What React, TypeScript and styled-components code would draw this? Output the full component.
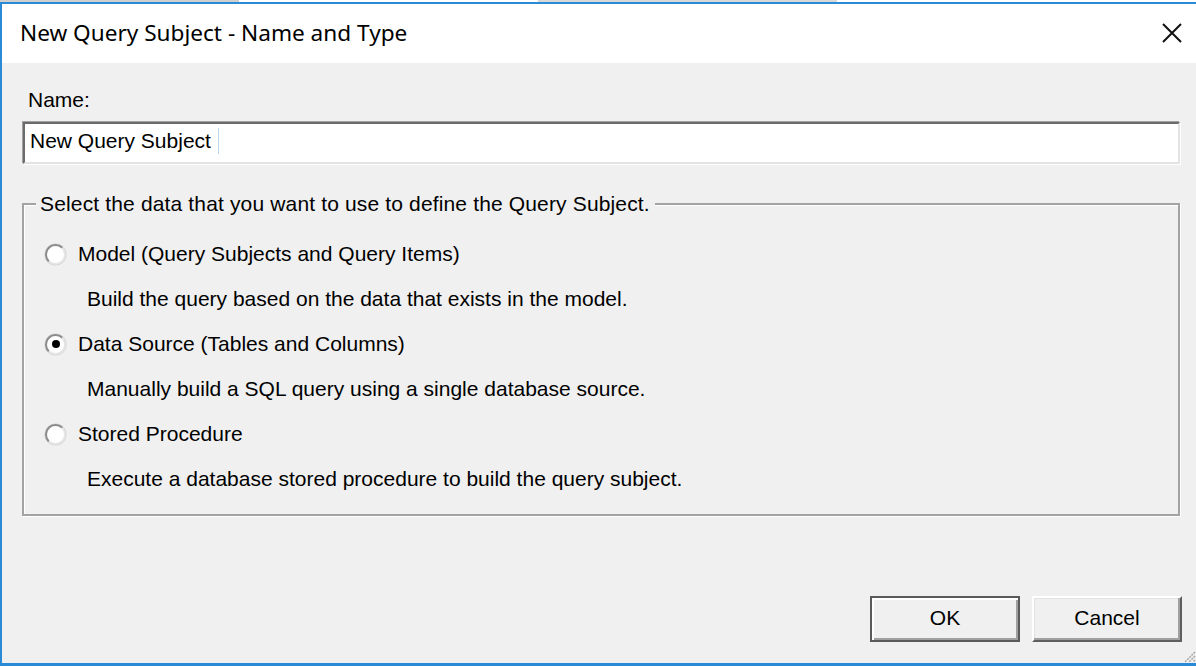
import React from "react";
import styled, { createGlobalStyle } from "styled-components";

const GlobalStyle = createGlobalStyle`
  html, body { margin: 0; padding: 0; background: #f0f0f0; overflow: hidden; }
  * { box-sizing: border-box; }
`;

const Screen = styled.div`
  width: 1196px;
  height: 666px;
  display: flex;
  flex-direction: column;
  font-family: "Liberation Sans", Arial, sans-serif;
  color: #000;
`;

const BackStrip = styled.div`
  height: 2px;
  background: linear-gradient(90deg, #cfcfcf 0 20%, #ffffff 20% 45%, #d8d8d8 45% 70%, #ffffff 70%);
`;

const Frame = styled.div`
  flex: 1;
  display: flex;
  flex-direction: column;
  border-top: 2px solid #2b8ad6;
  border-left: 2px solid #2b8ad6;
  border-bottom: 3px solid #2b8ad6;
  min-height: 0;
`;

const TitleBar = styled.div`
  height: 59px;
  flex: none;
  background: #fff;
  display: flex;
  align-items: center;
  padding: 0 14px 0 18px;
`;

const Title = styled.div`
  flex: 1;
  font-family: "Noto Sans", "Open Sans", sans-serif;
  font-size: 22.6px;
  line-height: 28px;
  color: #000;
  margin-top: -2px;
`;

const CloseButton = styled.div`
  width: 20px;
  height: 20px;
  display: flex;
  margin-top: -1px;
`;

const Body = styled.div`
  position: relative;
  flex: 1;
  background: #f0f0f0;
  display: flex;
  flex-direction: column;
  padding: 25px 16px 21px 20px;
  min-height: 0;
`;

const FieldLabel = styled.div`
  font-size: 21px;
  line-height: 24px;
  padding-left: 6px;
`;

const TextBox = styled.div`
  margin: 10px 0 0 1px;
  height: 42px;
  background: #fff;
  border-style: solid;
  border-width: 2px;
  border-color: #6b6b6b #e3e3e3 #e3e3e3 #6b6b6b;
  box-shadow: -1px -1px 0 #a0a0a0, 1px 1px 0 #fff;
  display: flex;
  align-items: center;
  padding: 0 0 4px 5px;
  font-size: 21px;
`;

const Caret = styled.span`
  display: inline-block;
  width: 1px;
  height: 26px;
  background: #b8d4ee;
  margin-left: 7px;
`;

const Group = styled.fieldset`
  margin: 28px 0 0 0;
  padding: 0;
  border: 2px solid #a3a3a3;
  box-shadow: inset 1px 1px 0 #fff, 1px 1px 0 #fff;
  min-width: 0;
`;

const Legend = styled.legend`
  margin-left: 12px;
  padding: 0 5px 0 4px;
  font-size: 21px;
  line-height: 24px;
  letter-spacing: 0.15px;
  background: #f0f0f0;
`;

const Options = styled.div`
  display: flex;
  flex-direction: column;
  padding: 16px 0 12px 21px;
`;

const Row = styled.div<{ $indent?: number }>`
  height: 45px;
  display: flex;
  align-items: center;
  padding-left: ${(p) => p.$indent ?? 0}px;
  padding-bottom: 1px;
  font-size: 21px;
`;

const Radio = styled.span<{ $checked?: boolean }>`
  width: 21px;
  height: 21px;
  border-radius: 50%;
  flex: none;
  background: #fff;
  border: 2px solid;
  border-color: #8c8c8c #e6e6e6 #e6e6e6 #8c8c8c;
  box-shadow: 0 0 0 0.5px #d0d0d0;
  display: flex;
  align-items: center;
  justify-content: center;
  margin-right: 12px;
  &::after {
    content: "";
    width: 8px;
    height: 8px;
    border-radius: 50%;
    background: #000;
    display: ${(p) => (p.$checked ? "block" : "none")};
  }
`;

const Spacer = styled.div`
  flex: 1;
`;

const ButtonRow = styled.div`
  display: flex;
  justify-content: flex-end;
  gap: 12px;
  margin-right: -2px;
`;

const Button = styled.div<{ $default?: boolean }>`
  width: 150px;
  height: 46px;
  display: flex;
  align-items: center;
  justify-content: center;
  padding-bottom: 3px;
  font-size: 21px;
  background: #f0f0f0;
  border-style: solid;
  border-width: 2px;
  border-color: ${(p) =>
    p.$default ? "#5a5a5a" : "#ffffff #5f5f5f #5f5f5f #ffffff"};
  box-shadow: ${(p) =>
    p.$default
      ? "inset 2px 2px 0 #fff, inset -2px -2px 0 #a0a0a0"
      : "inset -2px -2px 0 #a0a0a0, inset 1px 1px 0 #e3e3e3"};
`;

const Grip = styled.div`
  position: absolute;
  right: 0;
  bottom: 0;
  width: 16px;
  height: 16px;
  display: flex;
`;

const options = [
  {
    label: "Model (Query Subjects and Query Items)",
    desc: "Build the query based on the data that exists in the model.",
    checked: false,
  },
  {
    label: "Data Source (Tables and Columns)",
    desc: "Manually build a SQL query using a single database source.",
    checked: true,
  },
  {
    label: "Stored Procedure",
    desc: "Execute a database stored procedure to build the query subject.",
    checked: false,
  },
];

export default function App() {
  return (
    <>
      <GlobalStyle />
      <Screen>
        <BackStrip />
        <Frame>
          <TitleBar>
            <Title>New Query Subject - Name and Type</Title>
            <CloseButton>
              <svg width="20" height="20" viewBox="0 0 20 20">
                <path d="M1 1 L19 19 M19 1 L1 19" stroke="#111" strokeWidth="2" />
              </svg>
            </CloseButton>
          </TitleBar>
          <Body>
            <FieldLabel>Name:</FieldLabel>
            <TextBox>
              New Query Subject
              <Caret />
            </TextBox>
            <Group>
              <Legend>Select the data that you want to use to define the Query Subject.</Legend>
              <Options>
                {options.map((o) => (
                  <React.Fragment key={o.label}>
                    <Row>
                      <Radio $checked={o.checked} />
                      {o.label}
                    </Row>
                    <Row $indent={42}>{o.desc}</Row>
                  </React.Fragment>
                ))}
              </Options>
            </Group>
            <Spacer />
            <ButtonRow>
              <Button $default>OK</Button>
              <Button>Cancel</Button>
            </ButtonRow>
            <Grip>
              <svg width="16" height="16" viewBox="0 0 16 16">
                <path d="M15 5 L5 15 M15 9 L9 15 M15 13 L13 15" stroke="#a8a8a8" strokeWidth="1.5" strokeDasharray="2 1" />
              </svg>
            </Grip>
          </Body>
        </Frame>
      </Screen>
    </>
  );
}
